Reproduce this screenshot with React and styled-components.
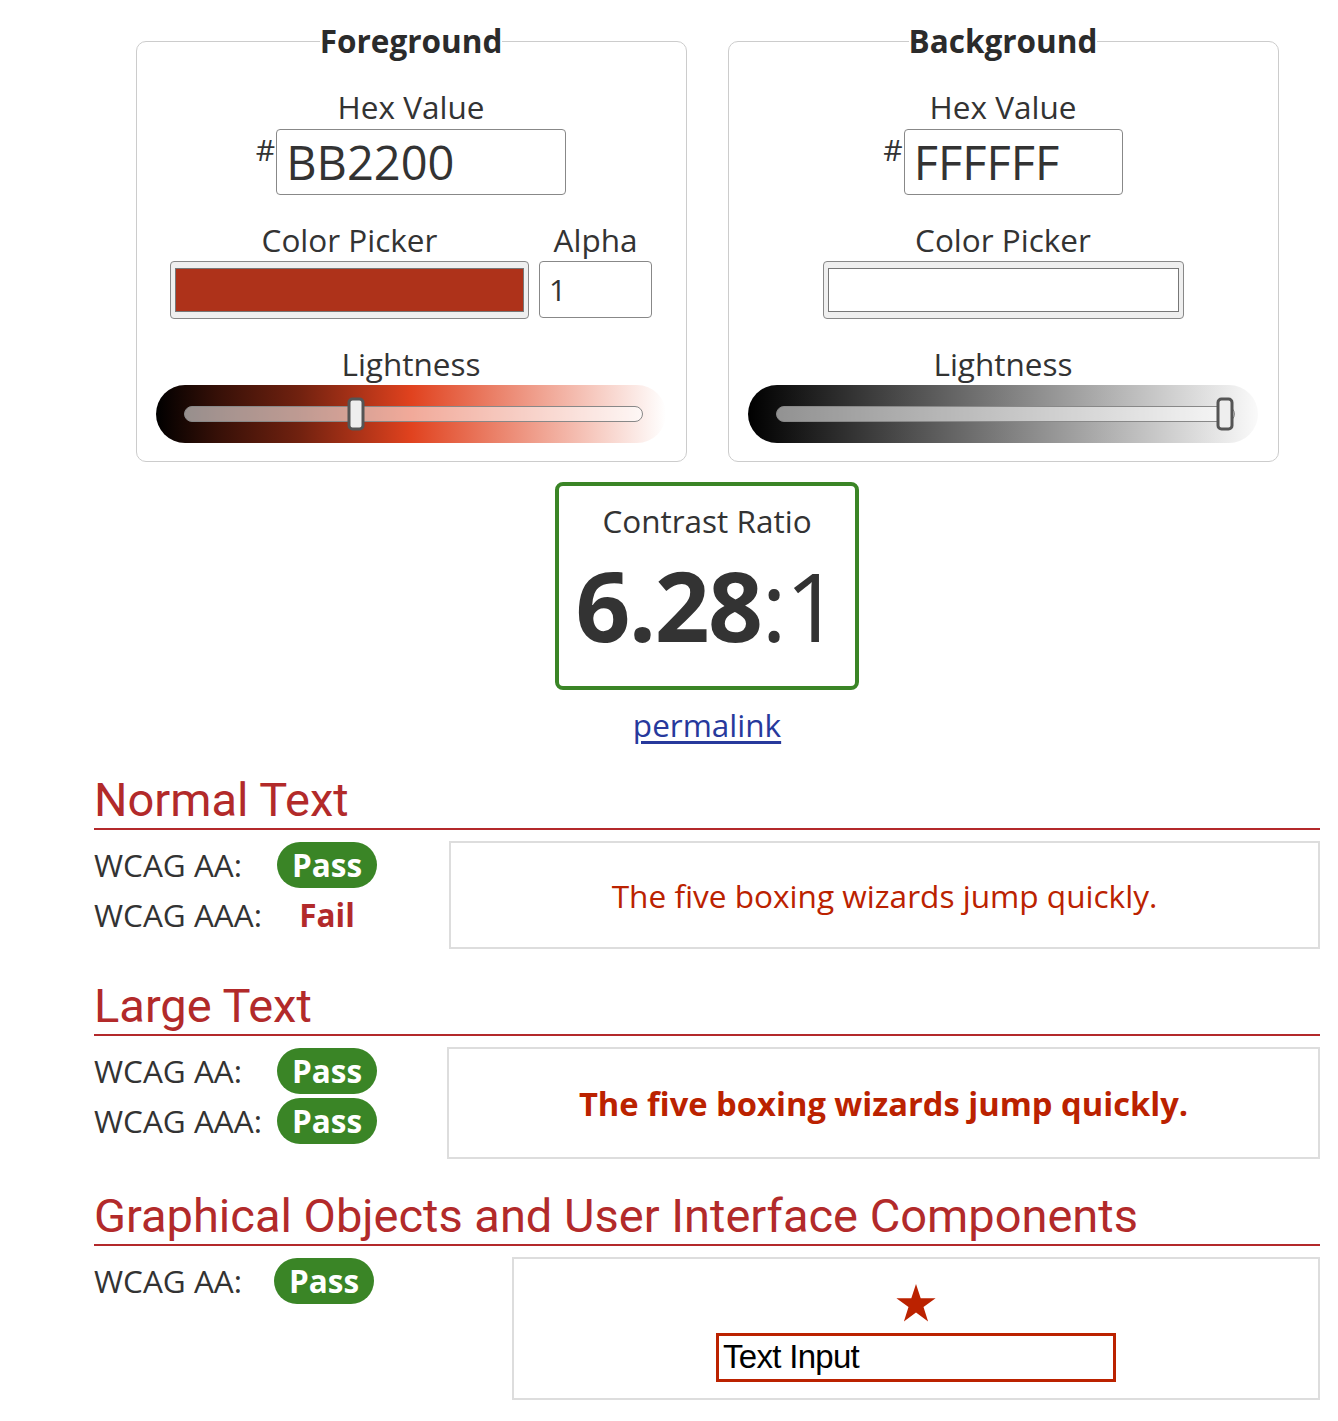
import styled, { createGlobalStyle } from 'styled-components';

const GlobalStyle = createGlobalStyle`
  html, body {
    margin: 0;
    padding: 0;
    background: #fff;
  }
  body {
    font-family: "Open Sans", "DejaVu Sans", sans-serif;
    color: #333;
  }
`;

const Page = styled.div`
  width: 1226px;
  margin-left: 94px;
  padding-top: 23px;
  padding-bottom: 20px;
`;

const Pickers = styled.div`
  display: flex;
  justify-content: center;
  gap: 41px;
`;

const Fieldset = styled.fieldset`
  box-sizing: border-box;
  width: 551px;
  min-width: 0;
  margin: 0;
  padding: 30px 20px 18px;
  border: 1px solid #ccc;
  border-radius: 10px;
  display: flex;
  flex-direction: column;
  align-items: center;
`;

const Legend = styled.legend`
  margin: 0 auto;
  padding: 0;
  font-size: 31.5px;
  line-height: 36px;
  font-weight: 700;
  color: #2b2b2b;
`;

const Label = styled.div`
  font-size: 31.5px;
  line-height: 36px;
  text-align: center;
  color: #333;
`;

const HexRow = styled.div`
  display: flex;
  align-items: flex-start;
  margin-top: 4px;
`;

const Hash = styled.span`
  font-size: 30px;
  line-height: 30px;
  margin-top: 6px;
  margin-right: 1px;
`;

const HexInput = styled.div`
  box-sizing: border-box;
  width: ${(p) => p.$w}px;
  height: 66px;
  border: 1px solid #888;
  border-radius: 4px;
  padding-left: 9px;
  font-size: 47px;
  line-height: 64px;
  color: #333;
`;

const PickerRow = styled.div`
  display: flex;
  gap: 10px;
  margin-top: 27px;
`;

const PickerCol = styled.div`
  display: flex;
  flex-direction: column;
  align-items: center;
`;

const Swatch = styled.div`
  box-sizing: border-box;
  width: ${(p) => p.$w}px;
  height: 58px;
  margin-top: 3px;
  padding: 6px 4px;
  background: #efefef;
  border: 1px solid #888;
  border-radius: 4px;
  & > div {
    height: 100%;
    background: ${(p) => p.$color};
    border: 1px solid #777;
    box-sizing: border-box;
  }
`;

const AlphaInput = styled.div`
  box-sizing: border-box;
  width: 113px;
  height: 57px;
  margin-top: 3px;
  border: 1px solid #888;
  border-radius: 4px;
  padding-left: 9px;
  font-size: 30px;
  line-height: 55px;
`;

const SliderWrap = styled.div`
  margin-top: 27px;
  display: flex;
  flex-direction: column;
  align-items: center;
`;

const Well = styled.div`
  box-sizing: border-box;
  width: 510px;
  height: 58px;
  margin-top: 3px;
  border-radius: 29px;
  background: ${(p) => p.$gradient};
  padding: 0 23px 0 28px;
  display: flex;
  align-items: center;
`;

const Track = styled.div`
  position: relative;
  flex: 1;
  height: 16px;
  box-sizing: border-box;
  border: 1px solid #888;
  border-radius: 8px;
  background: rgba(255, 255, 255, 0.55);
`;

const Thumb = styled.div`
  position: absolute;
  top: 50%;
  width: 17px;
  height: 33px;
  box-sizing: border-box;
  transform: translate(-50%, -50%);
  background: #eee;
  border: 3px solid #555;
  border-radius: 5px;
`;

const RatioBox = styled.div`
  box-sizing: border-box;
  width: 304px;
  height: 208px;
  margin: 20px auto 0;
  border: 4px solid #3a8526;
  border-radius: 8px;
  padding-top: 18px;
  text-align: center;
`;

const RatioLabel = styled(Label)`
  line-height: 34px;
`;

const RatioNumber = styled.div`
  margin-top: 19px;
  font-size: 96px;
  line-height: 96px;
  color: #333;
  letter-spacing: -1.5px;
  & b {
    font-weight: 700;
  }
`;

const Permalink = styled.a`
  display: block;
  width: max-content;
  margin: 17px auto 0;
  font-size: 31.5px;
  line-height: 36px;
  color: #27399c;
  text-decoration: underline;
  text-underline-offset: 4px;
`;

const Heading = styled.h2`
  margin: ${(p) => p.$top}px 0 0;
  font-family: Roboto, "Liberation Sans", sans-serif;
  font-weight: 400;
  font-size: 47px;
  line-height: 57px;
  color: #b22a2a;
  border-bottom: 2px solid #b3292b;
`;

const Results = styled.div`
  display: grid;
  grid-template-columns: ${(p) => p.$left}px 1fr;
  margin-top: 11px;
`;

const Checks = styled.div`
  display: grid;
  grid-template-columns: ${(p) => p.$label}px 100px;
  grid-auto-rows: 46px;
  row-gap: 4px;
  align-content: start;
  padding-top: 1px;
`;

const CheckLabel = styled.div`
  font-size: 31.5px;
  line-height: 46px;
  color: #333;
`;

const Pill = styled.div`
  border-radius: 23px;
  text-align: center;
  font-size: 31.5px;
  line-height: 46px;
  font-weight: 700;
  color: ${(p) => (p.$pass ? '#fff' : '#b22a2a')};
  background: ${(p) => (p.$pass ? '#3a8526' : 'transparent')};
`;

const Sample = styled.div`
  box-sizing: border-box;
  height: ${(p) => p.$h}px;
  border: 2px solid #ddd;
  display: flex;
  flex-direction: column;
  align-items: center;
  justify-content: center;
  color: #bb2200;
  font-size: ${(p) => (p.$large ? 32.7 : 31.6)}px;
  font-weight: ${(p) => (p.$large ? 700 : 400)};
`;

const GraphicSample = styled(Sample)`
  justify-content: flex-start;
  padding-top: 25px;
  gap: 11px;
`;

const TextInput = styled.div`
  box-sizing: border-box;
  width: 400px;
  height: 49px;
  border: 3px solid #bb2200;
  padding-left: 4px;
  font-family: "Liberation Sans", Arial, sans-serif;
  font-size: 33px;
  line-height: 42px;
  color: #000;
  letter-spacing: -0.7px;
`;

const fgGradient =
  'linear-gradient(to right, #000 0%, hsl(11,76%,12%) 12%, hsl(11,76%,25%) 28%, hsl(11,76%,50%) 50%, hsl(11,76%,75%) 75%, #fff 100%)';
const bgGradient = 'linear-gradient(to right, #000 0%, #fafafa 100%)';

function ColorPanel({ title, hex, color, swatchW, hexW, alpha, lightness, gradient }) {
  return (
    <Fieldset>
      <Legend>{title}</Legend>
      <Label>Hex Value</Label>
      <HexRow>
        <Hash>#</Hash>
        <HexInput $w={hexW}>{hex}</HexInput>
      </HexRow>
      <PickerRow>
        <PickerCol>
          <Label>Color Picker</Label>
          <Swatch $w={swatchW} $color={color}>
            <div />
          </Swatch>
        </PickerCol>
        {alpha && (
          <PickerCol>
            <Label>Alpha</Label>
            <AlphaInput>1</AlphaInput>
          </PickerCol>
        )}
      </PickerRow>
      <SliderWrap>
        <Label>Lightness</Label>
        <Well $gradient={gradient}>
          <Track>
            <Thumb style={{ left: `${lightness}%` }} />
          </Track>
        </Well>
      </SliderWrap>
    </Fieldset>
  );
}

function Star() {
  return (
    <svg width="40" height="38" viewBox="0 0 40 38">
      <polygon
        points="20,0 24.7,14.2 39.6,14.2 27.5,23 32.1,37.5 20,28.6 7.9,37.5 12.5,23 0.4,14.2 15.3,14.2"
        fill="#bb2200"
      />
    </svg>
  );
}

export default function App() {
  return (
    <>
      <GlobalStyle />
      <Page>
        <Pickers>
          <ColorPanel
            title="Foreground"
            hex="BB2200"
            color="#ae321a"
            swatchW={359}
            hexW={290}
            alpha
            lightness={37.5}
            gradient={fgGradient}
          />
          <ColorPanel
            title="Background"
            hex="FFFFFF"
            color="#fff"
            swatchW={361}
            hexW={219}
            lightness={98}
            gradient={bgGradient}
          />
        </Pickers>

        <RatioBox>
          <RatioLabel>Contrast Ratio</RatioLabel>
          <RatioNumber>
            <b>6.28</b>:1
          </RatioNumber>
        </RatioBox>
        <Permalink href="#">permalink</Permalink>

        <Heading $top={28}>Normal Text</Heading>
        <Results $left={355}>
          <Checks $label={183}>
            <CheckLabel>WCAG AA:</CheckLabel>
            <Pill $pass>Pass</Pill>
            <CheckLabel>WCAG AAA:</CheckLabel>
            <Pill>Fail</Pill>
          </Checks>
          <Sample $h={108}>The five boxing wizards jump quickly.</Sample>
        </Results>

        <Heading $top={28}>Large Text</Heading>
        <Results $left={353}>
          <Checks $label={183}>
            <CheckLabel>WCAG AA:</CheckLabel>
            <Pill $pass>Pass</Pill>
            <CheckLabel>WCAG AAA:</CheckLabel>
            <Pill $pass>Pass</Pill>
          </Checks>
          <Sample $h={112} $large>
            The five boxing wizards jump quickly.
          </Sample>
        </Results>

        <Heading $top={28}>Graphical Objects and User Interface Components</Heading>
        <Results $left={418}>
          <Checks $label={180}>
            <CheckLabel>WCAG AA:</CheckLabel>
            <Pill $pass>Pass</Pill>
          </Checks>
          <GraphicSample $h={143}>
            <Star />
            <TextInput>Text Input</TextInput>
          </GraphicSample>
        </Results>
      </Page>
    </>
  );
}
